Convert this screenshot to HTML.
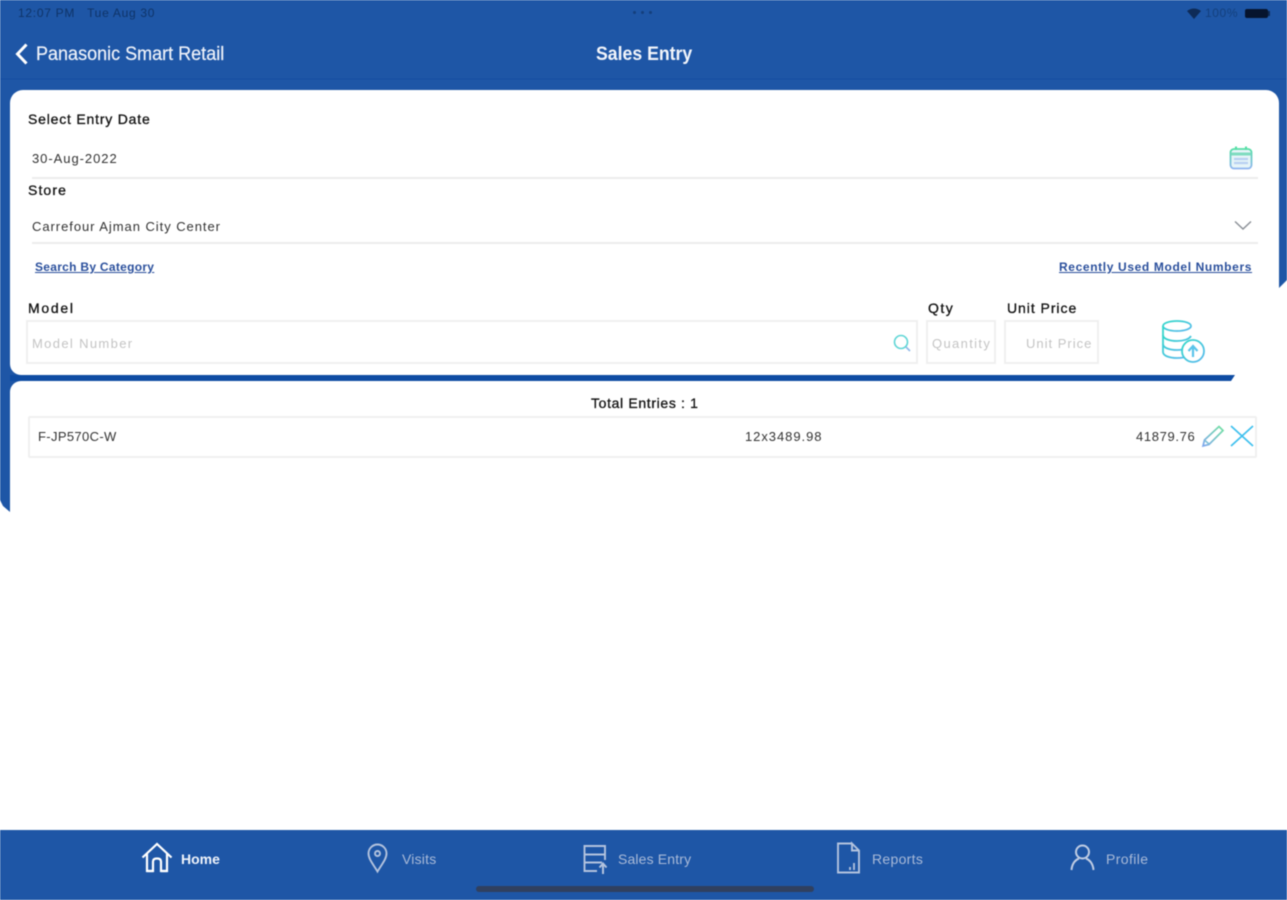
<!DOCTYPE html>
<html>
<head>
<meta charset="utf-8">
<style>
html,body{margin:0;padding:0;width:1287px;height:900px;overflow:hidden;background:#fff;font-family:"Liberation Sans",sans-serif;}
.a{position:absolute;white-space:nowrap;line-height:1;}
svg{position:absolute;overflow:visible;}
#page{position:relative;width:1287px;height:900px;filter:blur(.6px);overflow:hidden;}
.lbl{font-size:14px;color:#111;-webkit-text-stroke:.3px #111;}
.val{font-size:13px;color:#333;letter-spacing:.95px;}
.lnk{font-size:12px;color:#2a4f9c;text-decoration:underline;font-weight:bold;}
.ph{font-size:13px;color:#c4c4c4;letter-spacing:1.35px;}
.box{position:absolute;border:2px solid #f0f0f0;box-sizing:border-box;background:#fff;}
.line{position:absolute;height:2px;background:#ececec;}
.nav{font-size:14px;color:#a9bad8;}
</style>
</head>
<body>
<div id="page">
<!-- blue shapes -->
<div class="a" style="left:0;top:0;width:1287px;height:90px;background:#1e56a6;"></div>
<div class="a" style="left:0;top:78px;width:1287px;height:12px;background:#1a52a3;"></div>
<svg style="left:0;top:0" width="1287" height="900">
<path d="M0 80H1287V280L1279 288V110H10V512L3 506L0 500Z" fill="#1e56a6"/>
<path d="M0 360H30V396H0Z" fill="#1e56a6"/>
<path d="M10 375H1235L1231 381H10Z" fill="#0f4ca3"/>
</svg>
<!-- cards -->
<div class="a" style="left:10px;top:90px;width:1269px;height:285px;background:#fff;border-radius:13px 13px 0 11px;"></div>
<div class="a" style="left:1240px;top:288px;width:47px;height:87px;background:#fff;"></div>
<div class="a" style="left:10px;top:381px;width:1277px;height:130px;background:#fff;border-radius:11px 0 0 0;"></div>

<!-- status bar -->
<div class="a" style="left:18px;top:7px;font-size:12px;color:#0f3468;letter-spacing:.72px;">12:07 PM&nbsp;&nbsp; Tue Aug 30</div>
<div class="a" style="left:633px;top:11px;width:3px;height:3px;border-radius:50%;background:#143f7c;box-shadow:8px 0 #143f7c,16px 0 #143f7c;"></div>
<svg style="left:1187px;top:8px" width="14" height="11" viewBox="0 0 14 11"><path d="M0 3Q7 -2 14 3L7 11Z" fill="#0e2b57"/></svg>
<div class="a" style="left:1205px;top:7px;font-size:12px;color:#14407d;letter-spacing:.6px;">100%</div>
<div class="a" style="left:1245px;top:9px;width:23px;height:9px;background:#06142e;border-radius:2px;"></div>
<div class="a" style="left:1268px;top:11px;width:2px;height:5px;background:#0e2b57;"></div>

<!-- header -->
<svg style="left:14px;top:42px" width="16" height="24" viewBox="0 0 16 24"><path d="M12.5 2.5L3.5 12L12.5 21.5" fill="none" stroke="#fff" stroke-width="3"/></svg>
<div class="a" style="left:36px;top:45px;font-size:19px;color:#eef2fa;transform-origin:0 0;transform:scaleX(.948);-webkit-text-stroke:.2px #eef2fa;">Panasonic Smart Retail</div>
<div class="a" style="left:596px;top:45px;font-size:19px;font-weight:bold;color:#f2f5fb;transform-origin:0 0;transform:scaleX(.93);">Sales Entry</div>

<!-- form -->
<div class="a lbl" style="left:28px;top:112px;letter-spacing:.8px;">Select Entry Date</div>
<div class="a val" style="left:32px;top:152px;">30-Aug-2022</div>
<div class="line" style="left:32px;top:177px;width:1226px;"></div>
<svg style="left:1229px;top:145px" width="24" height="25" viewBox="0 0 24 25" fill="none">
<defs><linearGradient id="g1" x1="0" y1="0" x2="0" y2="1"><stop offset="0" stop-color="#55dfa6"/><stop offset="1" stop-color="#8fb4f0"/></linearGradient></defs>
<rect x="1.5" y="4" width="21" height="19.500" rx="3.500" fill="#e6f4f8" stroke="url(#g1)" stroke-width="1.800"/>
<path d="M2 9H22" stroke="#7fdcc0" stroke-width="3"/>
<path d="M7 1.500V5M17 1.500V5" stroke="#55dfa6" stroke-width="2"/>
<path d="M5 14H19M5 18H19" stroke="#b8d0f2" stroke-width="2.200"/>
</svg>
<div class="a lbl" style="left:28px;top:183px;letter-spacing:1.100px;">Store</div>
<div class="a val" style="left:32px;top:220px;">Carrefour Ajman City Center</div>
<svg style="left:1234px;top:220px" width="18" height="11" viewBox="0 0 18 11"><path d="M1 1.5L9 9L17 1.5" fill="none" stroke="#8a8f96" stroke-width="1.4"/></svg>
<div class="line" style="left:32px;top:242px;width:1226px;"></div>
<div class="a lnk" style="left:35px;top:261px;letter-spacing:.29px;">Search By Category</div>
<div class="a lnk" style="left:1059px;top:261px;letter-spacing:.63px;">Recently Used Model Numbers</div>

<div class="a lbl" style="left:28px;top:301px;letter-spacing:1.700px;">Model</div>
<div class="a lbl" style="left:928px;top:301px;letter-spacing:1.500px;">Qty</div>
<div class="a lbl" style="left:1007px;top:301px;letter-spacing:.95px;">Unit Price</div>
<div class="box" style="left:26px;top:320px;width:892px;height:44px;"></div>
<div class="box" style="left:926px;top:320px;width:70px;height:44px;"></div>
<div class="box" style="left:1004px;top:320px;width:95px;height:44px;"></div>
<div class="a ph" style="left:32px;top:337px;">Model Number</div>
<div class="a ph" style="left:932px;top:337px;">Quantity</div>
<div class="a ph" style="left:1026px;top:337px;letter-spacing:1px;">Unit Price</div>
<svg style="left:892px;top:333px" width="20" height="20" viewBox="0 0 20 20" fill="none"><circle cx="9" cy="9" r="6.5" stroke="#5fd6d6" stroke-width="1.6"/><path d="M14 14L18 18" stroke="#8fb8e8" stroke-width="1.6"/></svg>
<svg style="left:1160px;top:319px" width="46" height="46" viewBox="0 0 46 46" fill="none">
<defs><linearGradient id="g2" x1="0" y1="0" x2="1" y2="1"><stop offset="0" stop-color="#2fd8c8"/><stop offset="1" stop-color="#5ab8ee"/></linearGradient></defs>
<g stroke="url(#g2)" stroke-width="1.800">
<ellipse cx="17" cy="7" rx="14" ry="5"/>
<path d="M3 7V33C3 37 10 39 17 39C20 39 22 38.800 24 38.400"/>
<path d="M31 7V21"/>
<path d="M3 16C3 20 10 22 17 22C23 22 29 20.500 31 17M3 25C3 29 10 31 17 31C19 31 21 30.800 23 30.400"/>
<circle cx="33" cy="32" r="11"/>
</g>
<path d="M33 38V28M28.500 32L33 27L37.500 32" stroke="#5ac4ea" stroke-width="2.200"/>
</svg>

<!-- entries -->
<div class="a lbl" style="left:591px;top:396px;letter-spacing:.65px;">Total Entries : 1</div>
<div class="box" style="left:28px;top:416px;width:1229px;height:42px;border-radius:2px;"></div>
<div class="a val" style="left:38px;top:430px;letter-spacing:.35px;">F-JP570C-W</div>
<div class="a val" style="left:745px;top:430px;">12x3489.98</div>
<div class="a val" style="left:1136px;top:430px;letter-spacing:.65px;">41879.76</div>
<svg style="left:1201px;top:424px" width="24" height="24" viewBox="0 0 24 24" fill="none">
<defs><linearGradient id="g3" x1="1" y1="0" x2="0" y2="1"><stop offset="0" stop-color="#6fe0a0"/><stop offset="1" stop-color="#7fa8ee"/></linearGradient></defs>
<path d="M2 22L3.500 16L18 2.500L22 6.500L8 20.500Z" stroke="url(#g3)" stroke-width="1.700"/>
<path d="M4 16.500L8 20" stroke="#7fc0d8" stroke-width="1.500"/>
</svg>
<svg style="left:1230px;top:425px" width="24" height="22" viewBox="0 0 24 22" fill="none"><path d="M1 1L23 21M23 1L1 21" stroke="#3fc0ee" stroke-width="1.700"/></svg>

<!-- bottom nav -->
<div class="a" style="left:0;top:830px;width:1287px;height:70px;background:#1e56a6;"></div>
<svg style="left:141px;top:842px" width="32" height="31" viewBox="0 0 32 31" fill="none" stroke="#fff" stroke-width="2.200">
<path d="M1.500 15.500L16 2L30.500 15.500M26 11.500V29H20V19.500Q20 16.500 16 16.500Q12 16.500 12 19.500V29H6V11.500"/>
<path d="M6 29H12M20 29H26"/>
</svg>
<div class="a" style="left:181px;top:852px;font-size:14px;font-weight:bold;color:#f0f4fb;">Home</div>
<svg style="left:367px;top:843px" width="21" height="30" viewBox="0 0 21 30" fill="none" stroke="#b3c3de" stroke-width="1.900">
<path d="M10.500 28.500C6 21 1.500 16 1.500 10.500A9 9 0 0 1 19.500 10.500C19.500 16 15 21 10.500 28.500Z"/>
<circle cx="10.500" cy="10.500" r="2.500"/>
</svg>
<div class="a nav" style="left:402px;top:852px;letter-spacing:.2px;">Visits</div>
<svg style="left:583px;top:844px" width="26" height="31" viewBox="0 0 26 31" fill="none" stroke="#b3c3de" stroke-width="1.900">
<path d="M22 16V2H1.500V27H14M1.500 10.500H22M1.500 18.500H19"/>
<path d="M20 30V20M16.500 23.500L20 19.500L23.500 23.500" stroke-width="2"/>
</svg>
<div class="a nav" style="left:618px;top:852px;letter-spacing:.15px;">Sales Entry</div>
<svg style="left:836px;top:842px" width="25" height="32" viewBox="0 0 25 32" fill="none" stroke="#b3c3de" stroke-width="1.900">
<path d="M16 1.500H2V30.500H23V8.500L16 1.500V8.500H23"/>
<path d="M14 28V25M18 28V21" stroke-width="1.800"/>
</svg>
<div class="a nav" style="left:872px;top:852px;letter-spacing:.3px;">Reports</div>
<svg style="left:1070px;top:844px" width="25" height="27" viewBox="0 0 25 27" fill="none" stroke="#c0cde4" stroke-width="2">
<circle cx="12.500" cy="8" r="6.500"/>
<path d="M1.500 26C2 19 6 15.500 9 14.500M23.500 26C23 19 19 15.500 16 14.500"/>
</svg>
<div class="a nav" style="left:1106px;top:852px;letter-spacing:.4px;">Profile</div>
<div class="a" style="left:476px;top:886px;width:338px;height:6px;background:#30405f;border-radius:3px;"></div>
</div>
</body>
</html>
